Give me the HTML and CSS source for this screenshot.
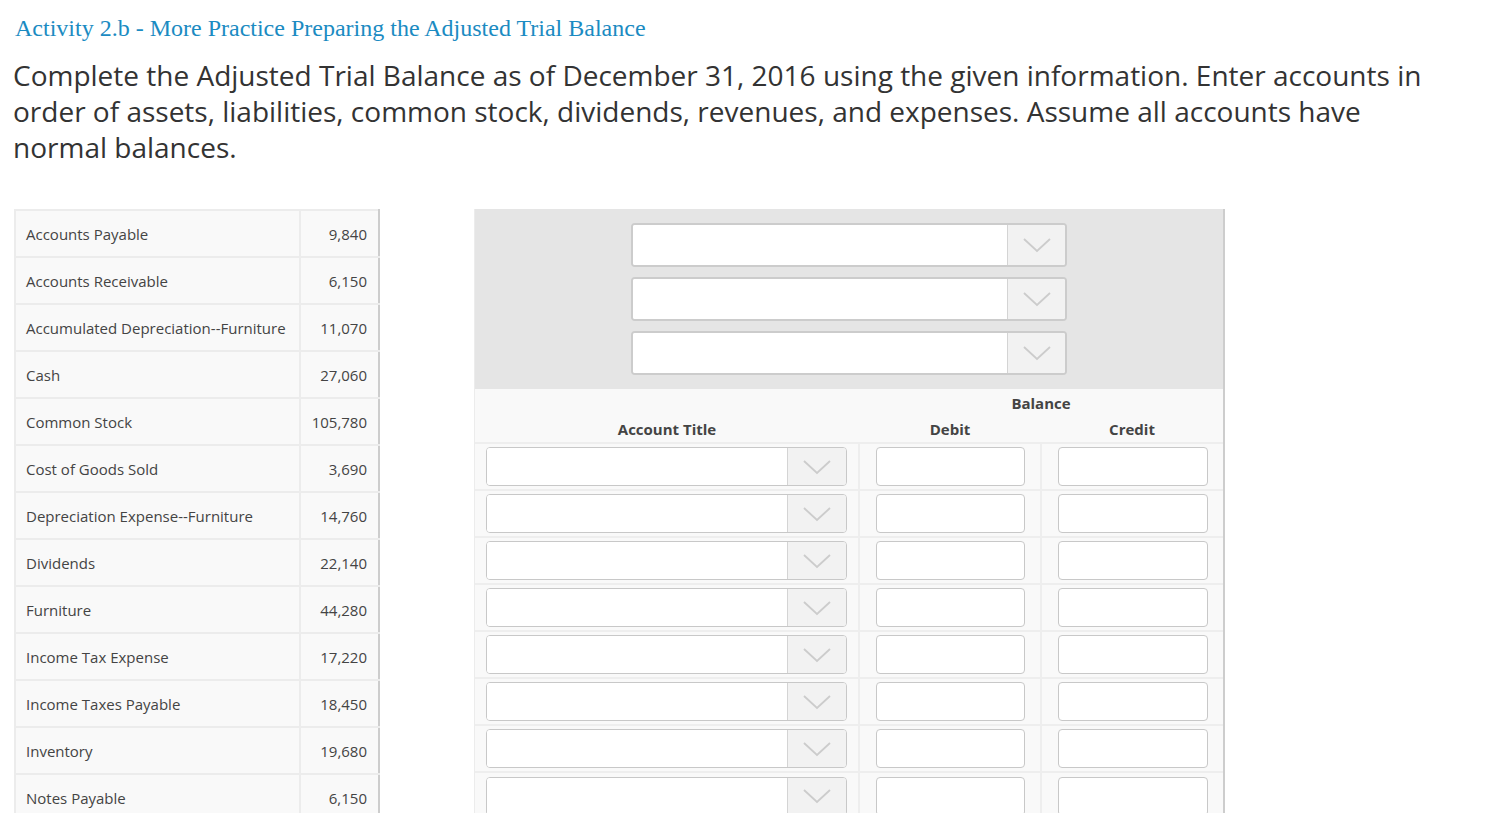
FILE: index.html
```html
<!DOCTYPE html>
<html>
<head>
<meta charset="utf-8">
<link rel="stylesheet" href="styles.css">
</head>
<body>
<h1 class="title">Activity 2.b - More Practice Preparing the Adjusted Trial Balance</h1>
<p class="instructions">Complete the Adjusted Trial Balance as of December 31, 2016 using the given information. Enter accounts in order of assets, liabilities, common stock, dividends, revenues, and expenses. Assume all accounts have normal balances.</p>
<div class="workarea">
  <table class="data">
    <tr><td class="name">Accounts Payable</td><td class="amt">9,840</td></tr>
    <tr><td class="name">Accounts Receivable</td><td class="amt">6,150</td></tr>
    <tr><td class="name">Accumulated Depreciation--Furniture</td><td class="amt">11,070</td></tr>
    <tr><td class="name">Cash</td><td class="amt">27,060</td></tr>
    <tr><td class="name">Common Stock</td><td class="amt">105,780</td></tr>
    <tr><td class="name">Cost of Goods Sold</td><td class="amt">3,690</td></tr>
    <tr><td class="name">Depreciation Expense--Furniture</td><td class="amt">14,760</td></tr>
    <tr><td class="name">Dividends</td><td class="amt">22,140</td></tr>
    <tr><td class="name">Furniture</td><td class="amt">44,280</td></tr>
    <tr><td class="name">Income Tax Expense</td><td class="amt">17,220</td></tr>
    <tr><td class="name">Income Taxes Payable</td><td class="amt">18,450</td></tr>
    <tr><td class="name">Inventory</td><td class="amt">19,680</td></tr>
    <tr><td class="name">Notes Payable</td><td class="amt">6,150</td></tr>
  </table>

  <div class="panel">
    <div class="heading-block">
      <div class="sel big"><div class="sel-field"></div><div class="sel-btn"><svg width="28" height="16" viewBox="0 0 28 16"><polyline points="1,2 14,14 27,2" fill="none" stroke="#cccccc" stroke-width="1.8"/></svg></div></div>
      <div class="sel big"><div class="sel-field"></div><div class="sel-btn"><svg width="28" height="16" viewBox="0 0 28 16"><polyline points="1,2 14,14 27,2" fill="none" stroke="#cccccc" stroke-width="1.8"/></svg></div></div>
      <div class="sel big"><div class="sel-field"></div><div class="sel-btn"><svg width="28" height="16" viewBox="0 0 28 16"><polyline points="1,2 14,14 27,2" fill="none" stroke="#cccccc" stroke-width="1.8"/></svg></div></div>
    </div>
    <table class="tb">
      <colgroup><col class="col-acct"><col class="col-num"><col class="col-num"></colgroup>
      <tr class="hdr1"><th></th><th colspan="2">Balance</th></tr>
      <tr class="hdr2"><th>Account Title</th><th>Debit</th><th>Credit</th></tr>
      <tr><td class="c-acct"><div class="sel"><div class="sel-field"></div><div class="sel-btn"><svg width="28" height="16" viewBox="0 0 28 16"><polyline points="1,2 14,14 27,2" fill="none" stroke="#cccccc" stroke-width="1.8"/></svg></div></div></td><td class="c-num"><div class="inp"></div></td><td class="c-num"><div class="inp"></div></td></tr>
      <tr><td class="c-acct"><div class="sel"><div class="sel-field"></div><div class="sel-btn"><svg width="28" height="16" viewBox="0 0 28 16"><polyline points="1,2 14,14 27,2" fill="none" stroke="#cccccc" stroke-width="1.8"/></svg></div></div></td><td class="c-num"><div class="inp"></div></td><td class="c-num"><div class="inp"></div></td></tr>
      <tr><td class="c-acct"><div class="sel"><div class="sel-field"></div><div class="sel-btn"><svg width="28" height="16" viewBox="0 0 28 16"><polyline points="1,2 14,14 27,2" fill="none" stroke="#cccccc" stroke-width="1.8"/></svg></div></div></td><td class="c-num"><div class="inp"></div></td><td class="c-num"><div class="inp"></div></td></tr>
      <tr><td class="c-acct"><div class="sel"><div class="sel-field"></div><div class="sel-btn"><svg width="28" height="16" viewBox="0 0 28 16"><polyline points="1,2 14,14 27,2" fill="none" stroke="#cccccc" stroke-width="1.8"/></svg></div></div></td><td class="c-num"><div class="inp"></div></td><td class="c-num"><div class="inp"></div></td></tr>
      <tr><td class="c-acct"><div class="sel"><div class="sel-field"></div><div class="sel-btn"><svg width="28" height="16" viewBox="0 0 28 16"><polyline points="1,2 14,14 27,2" fill="none" stroke="#cccccc" stroke-width="1.8"/></svg></div></div></td><td class="c-num"><div class="inp"></div></td><td class="c-num"><div class="inp"></div></td></tr>
      <tr><td class="c-acct"><div class="sel"><div class="sel-field"></div><div class="sel-btn"><svg width="28" height="16" viewBox="0 0 28 16"><polyline points="1,2 14,14 27,2" fill="none" stroke="#cccccc" stroke-width="1.8"/></svg></div></div></td><td class="c-num"><div class="inp"></div></td><td class="c-num"><div class="inp"></div></td></tr>
      <tr><td class="c-acct"><div class="sel"><div class="sel-field"></div><div class="sel-btn"><svg width="28" height="16" viewBox="0 0 28 16"><polyline points="1,2 14,14 27,2" fill="none" stroke="#cccccc" stroke-width="1.8"/></svg></div></div></td><td class="c-num"><div class="inp"></div></td><td class="c-num"><div class="inp"></div></td></tr>
      <tr><td class="c-acct"><div class="sel"><div class="sel-field"></div><div class="sel-btn"><svg width="28" height="16" viewBox="0 0 28 16"><polyline points="1,2 14,14 27,2" fill="none" stroke="#cccccc" stroke-width="1.8"/></svg></div></div></td><td class="c-num"><div class="inp"></div></td><td class="c-num"><div class="inp"></div></td></tr>
    </table>
  </div>
</div>
</body>
</html>
```

FILE: styles.css
```css
html, body {
  margin: 0;
  padding: 0;
  background: #ffffff;
}
body {
  padding: 0 14px 40px 14px;
  font-family: "Open Sans", "Liberation Sans", sans-serif;
  color: #444;
}
.title {
  margin: 0;
  padding: 13px 0 0 1px;
  font-family: "Liberation Serif", serif;
  font-weight: normal;
  font-size: 24px;
  line-height: 30px;
  color: #1b8bc2;
}
.instructions {
  margin: 14px 0 0 -1px;
  font-size: 28px;
  line-height: 36px;
  color: #333;
  max-width: 1440px;
}
.workarea {
  display: flex;
  align-items: flex-start;
  gap: 94px;
  margin-top: 44px;
}
.data {
  border-collapse: collapse;
  width: 366px;
  font-size: 15px;
}
.data td {
  background: #f9f9f9;
  border: 2px solid #ececec;
  height: 47px;
  padding: 0 10px 0 10px;
  box-sizing: border-box;
  color: #444;
}
.data td.name {
  width: 285px;
}
.data td.amt {
  text-align: right;
  padding-right: 11px;
  border-right-color: #cdcdcd;
}
.panel {
  width: 748px;
  border-left: 1px solid #ececec;
  border-right: 2px solid #cdcdcd;
  background: #f9f9f9;
}
.heading-block {
  background: #e5e5e5;
  padding: 14px 0;
  display: flex;
  flex-direction: column;
  align-items: center;
  gap: 10px;
}
.sel {
  display: flex;
  box-sizing: border-box;
  border: 2px solid #cccccc;
  border-radius: 4px;
  background: #fff;
  overflow: hidden;
  height: 39px;
}
.sel.big {
  width: 436px;
  height: 44px;
}
.sel-field {
  flex: 1;
  background: #fff;
}
.sel-btn {
  width: 57px;
  background: #f2f2f2;
  border-left: 1px solid #d4d4d4;
  display: flex;
  align-items: center;
  justify-content: center;
}
.tb {
  width: 100%;
  border-collapse: collapse;
  table-layout: fixed;
}
.col-acct {
  width: 384px;
}
.col-num {
  width: 182px;
}
.tb th {
  font-size: 15px;
  font-weight: bold;
  color: #444;
  text-align: center;
  padding: 0;
  height: 26px;
  line-height: 26px;
  vertical-align: middle;
}
.hdr1 th {
  padding-top: 1px;
}
.tb td {
  border-top: 2px solid #eeeeee;
  border-right: 2px solid #eeeeee;
  height: 47px;
  box-sizing: border-box;
  vertical-align: middle;
}
.tb td:last-child {
  border-right: none;
}
.tb td.c-acct {
  padding: 3px 11px 3px 11px;
}
.tb td.c-num {
  padding: 3px 15px 3px 16px;
}
.inp {
  height: 39px;
  box-sizing: border-box;
  border: 1px solid #c8c8c8;
  border-radius: 4px;
  background: #fff;
}
.tb td .sel {
  border-width: 1px;
  border-color: #c8c8c8;
}
.tb td .sel-btn {
  width: 58px;
}
```
